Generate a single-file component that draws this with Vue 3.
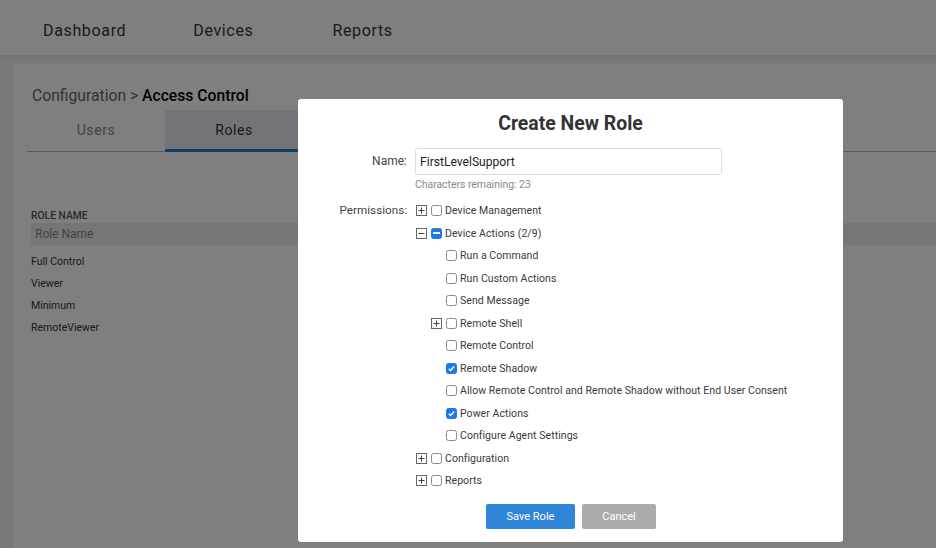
<template>
  <div class="page">
    <nav class="topnav">
      <a v-for="item in navItems" :key="item" class="nav-link">{{ item }}</a>
    </nav>

    <main class="content">
      <section class="panel">
        <h1 class="crumbs">Configuration &gt; <strong>Access Control</strong></h1>
        <div class="tabs">
          <div class="tab">Users</div>
          <div class="tab active">Roles</div>
        </div>
        <div class="table">
          <div class="col-title">ROLE NAME</div>
          <div class="filter">Role Name</div>
          <div v-for="role in roles" :key="role" class="role-row">{{ role }}</div>
        </div>
      </section>
    </main>

    <div class="overlay">
      <div class="modal">
        <h2 class="modal-title">Create New Role</h2>

        <div class="field">
          <label class="field-label name-label">Name:</label>
          <div class="field-body">
            <input class="name-input" type="text" value="FirstLevelSupport" />
            <div class="hint">Characters remaining: 23</div>
          </div>
        </div>

        <div class="field perms">
          <label class="field-label">Permissions:</label>
          <ul class="tree">
            <li
              v-for="node in permissions"
              :key="node.label"
              class="node"
              :class="{ child: node.child }"
            >
              <span class="expander">
                <svg v-if="node.toggle" width="11" height="11" viewBox="0 0 11 11">
                  <rect x="0.5" y="0.5" width="10" height="10" fill="#fff" stroke="#666" />
                  <path d="M2.5 5.5h6" stroke="#444" />
                  <path v-if="node.toggle === 'plus'" d="M5.5 2.5v6" stroke="#444" />
                </svg>
              </span>
              <span class="check" :class="node.state">
                <svg v-if="node.state === 'checked'" width="11" height="11" viewBox="0 0 11 11">
                  <path d="M2.2 5.7l2.2 2.2 4.4-4.8" fill="none" stroke="#fff" stroke-width="1.7" />
                </svg>
                <span v-if="node.state === 'mixed'" class="dash"></span>
              </span>
              <span class="node-label">{{ node.label }}</span>
            </li>
          </ul>
        </div>

        <div class="actions">
          <button class="btn save">Save Role</button>
          <button class="btn cancel">Cancel</button>
        </div>
      </div>
    </div>
  </div>
</template>

<script setup>
const navItems = ['Dashboard', 'Devices', 'Reports']
const roles = ['Full Control', 'Viewer', 'Minimum', 'RemoteViewer']

const permissions = [
  { label: 'Device Management', toggle: 'plus' },
  { label: 'Device Actions (2/9)', toggle: 'minus', state: 'mixed' },
  { label: 'Run a Command', child: true },
  { label: 'Run Custom Actions', child: true },
  { label: 'Send Message', child: true },
  { label: 'Remote Shell', child: true, toggle: 'plus' },
  { label: 'Remote Control', child: true },
  { label: 'Remote Shadow', child: true, state: 'checked' },
  { label: 'Allow Remote Control and Remote Shadow without End User Consent', child: true },
  { label: 'Power Actions', child: true, state: 'checked' },
  { label: 'Configure Agent Settings', child: true },
  { label: 'Configuration', toggle: 'plus' },
  { label: 'Reports', toggle: 'plus' }
]
</script>

<style>
html,
body {
  margin: 0;
  overflow: hidden;
}
</style>

<style scoped>
.page {
  position: relative;
  width: 936px;
  height: 548px;
  overflow: hidden;
  background: #f3f3f3;
  font-family: Roboto, "Liberation Sans", sans-serif;
  color: #222;
}

.topnav {
  display: flex;
  align-items: center;
  gap: 67px;
  height: 55px;
  padding: 6px 0 0 43px;
  box-sizing: border-box;
  background: #fff;
  box-shadow: 0 1px 4px rgba(0, 0, 0, 0.1);
}

.nav-link {
  font-size: 16px;
  letter-spacing: 0.65px;
  color: #333;
}

.nav-link:last-child {
  margin-left: 12px;
}

.content {
  padding: 9px 0 0 13px;
}

.panel {
  height: 484px;
  padding-top: 22px;
  box-sizing: border-box;
  background: #fff;
}

.crumbs {
  margin: 0 0 0 19px;
  height: 24px;
  font-size: 15.7px;
  line-height: 20px;
  font-weight: 400;
  color: #666;
}

.crumbs strong {
  font-weight: 500;
  color: #000;
}

.tabs {
  display: flex;
  height: 41px;
  margin-left: 14px;
  border-bottom: 1px solid #bbb;
}

.tab {
  width: 138px;
  padding-top: 12px;
  box-sizing: border-box;
  text-align: center;
  font-size: 14px;
  letter-spacing: 0.6px;
  color: #888;
}

.tab.active {
  width: 150px;
  padding-right: 12px;
  height: 42px;
  background: #e4e8ef;
  border-bottom: 3px solid #2a80c8;
  color: #333;
}

.table {
  margin: 58px 0 0 18px;
}

.col-title {
  font-size: 10.3px;
  line-height: 12px;
  font-weight: 500;
  color: #555;
}

.filter {
  height: 22px;
  margin-top: 1px;
  padding-left: 4px;
  background: #ececec;
  font-size: 12px;
  line-height: 22px;
  color: #888;
}

.role-row {
  height: 22px;
  font-size: 10.5px;
  line-height: 22px;
  color: #333;
}

.filter + .role-row {
  margin-top: 6px;
}

.overlay {
  position: absolute;
  inset: 0;
  background: rgba(0, 0, 0, 0.5);
}

.modal {
  position: absolute;
  left: 298px;
  top: 99px;
  width: 545px;
  height: 443px;
  box-sizing: border-box;
  padding-top: 13px;
  background: #fff;
  border-radius: 3px;
}

.modal-title {
  margin: 0;
  height: 36px;
  font-size: 19.4px;
  line-height: 24px;
  font-weight: 700;
  text-align: center;
  color: #333;
}

.field {
  display: flex;
  align-items: flex-start;
}

.field-label {
  width: 109px;
  flex: none;
  text-align: right;
  font-size: 12px;
  color: #444;
}

.name-label {
  line-height: 26px;
}

.field-body {
  margin-left: 8px;
}

.name-input {
  display: block;
  width: 307px;
  height: 27px;
  padding: 0 4px;
  box-sizing: border-box;
  border: 1px solid #dcdcdc;
  border-radius: 3px;
  font-family: inherit;
  font-size: 12.1px;
  color: #222;
  outline: none;
}

.hint {
  margin-top: 3px;
  font-size: 10.4px;
  line-height: 13px;
  color: #888;
}

.perms {
  margin-top: 8.5px;
}

.perms .field-label {
  line-height: 21px;
  font-size: 11.7px;
}

.tree {
  margin: 0 0 0 9px;
  padding: 0;
  list-style: none;
}

.node {
  display: flex;
  align-items: center;
  height: 22.5px;
}

.node.child {
  padding-left: 15px;
}

.expander {
  display: flex;
  width: 15px;
  height: 11px;
  flex: none;
}

.check {
  display: flex;
  align-items: center;
  justify-content: center;
  width: 11px;
  height: 11px;
  flex: none;
  box-sizing: border-box;
  border: 1px solid #8a8a8a;
  border-radius: 2.5px;
  background: #fff;
}

.check.checked,
.check.mixed {
  border-color: #1a7ae8;
  background: #1a7ae8;
}

.dash {
  width: 7px;
  height: 2px;
  background: #fff;
}

.node-label {
  margin-left: 3px;
  font-size: 10.5px;
  letter-spacing: 0.06px;
  color: #3a3a3a;
  white-space: nowrap;
}

.actions {
  display: flex;
  justify-content: flex-start;
  gap: 7px;
  margin: 11.5px 0 0 188px;
}

.btn {
  height: 25px;
  padding: 0;
  border: none;
  border-radius: 2px;
  font-family: inherit;
  font-size: 11px;
  color: #fff;
}

.save {
  width: 89px;
  background: #2f86d8;
}

.cancel {
  width: 74px;
  background: #ababab;
}
</style>
